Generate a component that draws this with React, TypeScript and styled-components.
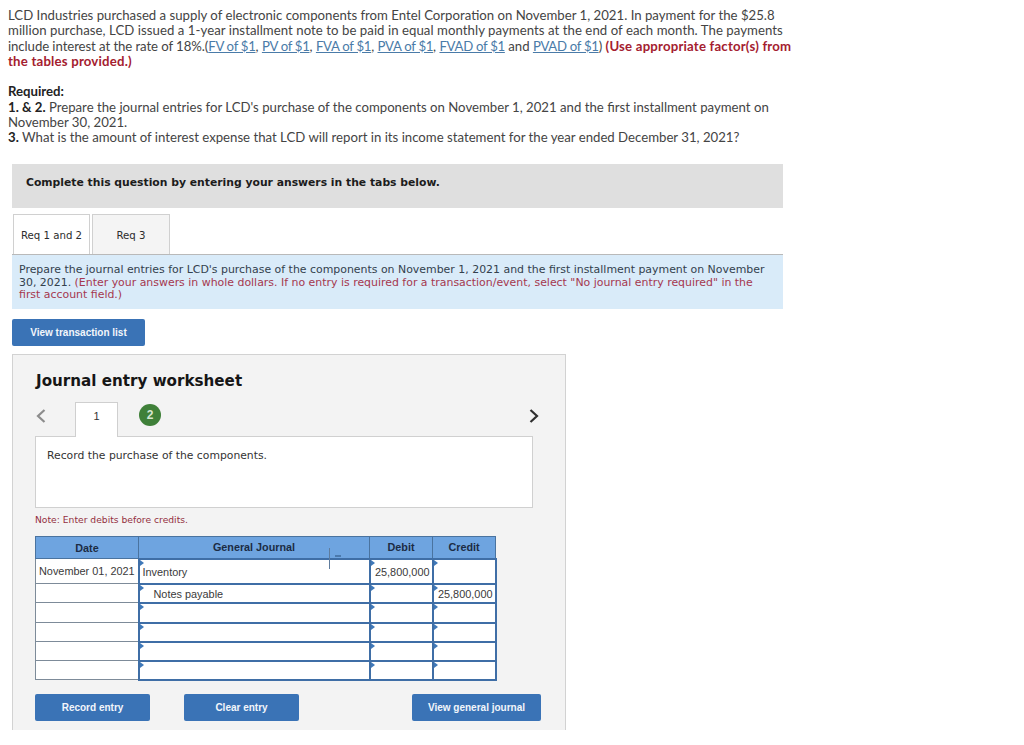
import styled, {createGlobalStyle} from 'styled-components';

const GlobalStyle = createGlobalStyle`
    html, body {
        margin: 0;
        padding: 0;
        background: #fff;
    }
`;

const Page = styled.div`
    width: 1024px;
    height: 745px;
    overflow: hidden;
    box-sizing: border-box;
    padding: 8px 0 0 12px;
    display: flex;
    flex-direction: column;
    align-items: flex-start;
`;

const Question = styled.div`
    margin-left: -4px;
    width: 800px;
    font-family: "Lato", "Open Sans", sans-serif;
    font-size: 13.2px;
    line-height: 15.35px;
    color: #444;
    white-space: nowrap;
`;

const Block = styled.p`
    margin: 0 0 15px;
`;

const Spaced = styled.span<{ $spacing: number }>`
    letter-spacing: ${p => p.$spacing}px;
`;

const Strong = styled.b`
    color: #222;
`;

const Warn = styled.b`
    color: #a4202f;
    letter-spacing: 0.2px;
`;

const Link = styled.a`
    color: #4a7ba8;
    text-decoration: underline;
    letter-spacing: -0.3px;
`;

const Banner = styled.div`
    width: 771px;
    height: 44px;
    margin-top: 3px;
    box-sizing: border-box;
    padding: 12px 14px 0;
    background: #dfdfdf;
    font-family: "DejaVu Sans", sans-serif;
    font-size: 10.8px;
    font-weight: 700;
    line-height: 14px;
    color: #1c1c1c;
`;

const Tabs = styled.div`
    display: flex;
    gap: 2px;
    margin: 6px 0 0 1px;
`;

const Tab = styled.div<{ $active?: boolean }>`
    width: ${p => (p.$active ? '77px' : '78px')};
    height: 40px;
    box-sizing: border-box;
    border: 1px solid #d0d0d0;
    border-bottom: none;
    padding-top: 2px;
    background: ${p => (p.$active ? '#fff' : '#f4f4f4')};
    display: flex;
    align-items: center;
    justify-content: center;
    font-family: "DejaVu Sans", sans-serif;
    font-size: 10.2px;
    color: #2c2c2c;
`;

const Instructions = styled.div`
    width: 771px;
    height: 55px;
    box-sizing: border-box;
    border-top: 1px solid #b9b9b9;
    padding: 9px 7px 0;
    background: #d9ebf9;
    font-family: "DejaVu Sans", sans-serif;
    font-size: 10.93px;
    line-height: 12.8px;
    color: #33414d;
    white-space: nowrap;
`;

const Hint = styled.span`
    color: #a5384f;
`;

const Button = styled.button<{ $width: number }>`
    width: ${p => p.$width}px;
    height: 27px;
    padding: 0;
    border: none;
    border-radius: 2px;
    background: #3a73b6;
    color: #f2f6fb;
    font-family: "Liberation Sans", Arial, sans-serif;
    font-size: 10px;
    font-weight: 700;
`;

const TransactionButton = styled(Button)`
    margin-top: 10px;
`;

const Worksheet = styled.section`
    width: 554px;
    height: 376px;
    margin-top: 8px;
    box-sizing: border-box;
    border: 1px solid #d2d2d2;
    border-bottom: none;
    background: #f3f3f3;
    padding: 15px 32px 0 22px;
`;

const Title = styled.h2`
    margin: 0 0 0 1px;
    font-family: "DejaVu Sans", sans-serif;
    font-size: 15.15px;
    font-weight: 700;
    line-height: 22px;
    color: #161616;
`;

const EntryNav = styled.div`
    display: flex;
    align-items: flex-start;
    height: 35px;
    margin-top: 10px;
`;

const Chevron = styled.svg`
    width: 12px;
    height: 16px;
    margin-top: 6px;
    fill: none;
    stroke-width: 2.2;
`;

const EntryTab = styled.div`
    position: relative;
    z-index: 1;
    width: 43px;
    height: 35px;
    margin-left: 28px;
    box-sizing: border-box;
    border: 1px solid #cfcfcf;
    border-bottom: none;
    background: #fff;
    display: flex;
    align-items: center;
    justify-content: center;
    padding-bottom: 7px;
    font-family: "Liberation Sans", Arial, sans-serif;
    font-size: 11px;
    color: #333;
`;

const EntryBadge = styled.div`
    width: 22px;
    height: 22px;
    margin: 2px 0 0 21px;
    border-radius: 50%;
    background: #3f8039;
    color: #d6e6d2;
    display: flex;
    align-items: center;
    justify-content: center;
    font-family: "Liberation Sans", Arial, sans-serif;
    font-size: 12px;
    font-weight: 700;
`;

const NextChevron = styled(Chevron)`
    margin-left: auto;
    margin-right: -7px;
`;

const EntryBox = styled.div`
    width: 498px;
    height: 72px;
    box-sizing: border-box;
    margin-top: -1px;
    border: 1px solid #d0d0d0;
    background: #fff;
    padding: 12px 11px 0;
    font-family: "DejaVu Sans", sans-serif;
    font-size: 10.8px;
    line-height: 14px;
    color: #333;
`;

const Note = styled.div`
    margin-top: 6px;
    font-family: "DejaVu Sans", sans-serif;
    font-size: 9.2px;
    line-height: 12px;
    color: #93303f;
`;

const TableWrap = styled.div`
    position: relative;
    margin-top: 10px;
    width: 460px;
`;

const Journal = styled.table`
    width: 460px;
    table-layout: fixed;
    border-collapse: collapse;
    font-family: "Liberation Sans", Arial, sans-serif;
    font-size: 10.9px;
    color: #3a3a3a;
`;

const HeadCell = styled.th`
    height: 21px;
    padding: 0;
    border: 1px solid #4a739f;
    background: #6ea4e0;
    color: #1c2c44;
    font-size: 10.8px;
    font-weight: 700;
`;

const DateCell = styled.td<{ $height: number }>`
    height: ${p => p.$height}px;
    padding: 0 0 0 3px;
    border: 1px solid #7d8b99;
    background: #fff;
    white-space: nowrap;
`;

const EntryCell = styled.td<{ $height: number; $align?: string; $indent?: number }>`
    position: relative;
    height: ${p => p.$height}px;
    padding: 1px 2px 0 ${p => p.$indent ?? 3}px;
    border: 2px solid #3f6ea6;
    background: #fff;
    text-align: ${p => p.$align ?? 'left'};
    white-space: nowrap;
`;

const Marker = styled.span`
    position: absolute;
    left: 0;
    top: 0;
    width: 0;
    height: 0;
    border-top: 3px solid transparent;
    border-bottom: 3px solid transparent;
    border-left: 4px solid #3f78b8;
`;

const ResizeLine = styled.span`
    position: absolute;
    left: 294px;
    top: 12px;
    width: 1px;
    height: 21px;
    background: #5f7c9d;
`;

const ResizeDash = styled.span`
    position: absolute;
    left: 300px;
    top: 19px;
    width: 6px;
    height: 2px;
    background: #4b79ad;
`;

const Actions = styled.div`
    display: flex;
    align-items: center;
    width: 506px;
    margin-top: 13px;
`;

const EntryButton = styled(Button)`
    padding-top: 1px;
`;

const ClearButton = styled(EntryButton)`
    margin-left: 34px;
`;

const JournalButton = styled(EntryButton)`
    margin-left: auto;
`;

const rows = [
    {height: 22, date: 'November 01, 2021', account: 'Inventory', debit: '25,800,000', credit: ''},
    {height: 16, date: '', account: 'Notes payable', debit: '', credit: '25,800,000', indent: 14},
    {height: 17, date: '', account: '', debit: '', credit: ''},
    {height: 16, date: '', account: '', debit: '', credit: ''},
    {height: 16, date: '', account: '', debit: '', credit: ''},
    {height: 16, date: '', account: '', debit: '', credit: ''},
];

export default function App() {
    return (
        <Page>
            <GlobalStyle/>
            <Question>
                <Block>
                    LCD Industries purchased a supply of electronic components from Entel Corporation on November 1, 2021. In payment for the $25.8<br/>
                    <Spaced $spacing={0.05}>million purchase, LCD issued a 1-year installment note to be paid in equal monthly payments at the end of each month. The payments</Spaced><br/>
                    <Spaced $spacing={-0.08}>include interest at the rate of 18%.(</Spaced><Link>FV of $1</Link>, <Link>PV of $1</Link>, <Link>FVA of $1</Link>, <Link>PVA of $1</Link>, <Link>FVAD of $1</Link> and <Link>PVAD of $1</Link>) <Warn>(Use appropriate factor(s) from<br/>
                    the tables provided.)</Warn>
                </Block>
                <Block>
                    <Strong>Required:</Strong><br/>
                    <Strong>1. &amp; 2.</Strong> Prepare the journal entries for LCD's purchase of the components on November 1, 2021 and the first installment payment on<br/>
                    November 30, 2021.<br/>
                    <Strong>3.</Strong> What is the amount of interest expense that LCD will report in its income statement for the year ended December 31, 2021?
                </Block>
            </Question>
            <Banner>Complete this question by entering your answers in the tabs below.</Banner>
            <Tabs>
                <Tab $active>Req 1 and 2</Tab>
                <Tab>Req 3</Tab>
            </Tabs>
            <Instructions>
                Prepare the journal entries for LCD's purchase of the components on November 1, 2021 and the first installment payment on November<br/>
                30, 2021. <Hint>(Enter your answers in whole dollars. If no entry is required for a transaction/event, select "No journal entry required" in the<br/>
                first account field.)</Hint>
            </Instructions>
            <TransactionButton $width={133}>View transaction list</TransactionButton>
            <Worksheet>
                <Title>Journal entry worksheet</Title>
                <EntryNav>
                    <Chevron viewBox="0 0 12 16" stroke="#8c8c8c"><path d="M9.5 2 3 8l6.5 6"/></Chevron>
                    <EntryTab>1</EntryTab>
                    <EntryBadge>2</EntryBadge>
                    <NextChevron viewBox="0 0 12 16" stroke="#2f2f2f"><path d="m2.5 2 6.5 6-6.5 6"/></NextChevron>
                </EntryNav>
                <EntryBox>Record the purchase of the components.</EntryBox>
                <Note>Note: Enter debits before credits.</Note>
                <TableWrap>
                    <Journal>
                        <colgroup>
                            <col width={103}/>
                            <col width={231}/>
                            <col width={63}/>
                            <col width={63}/>
                        </colgroup>
                        <thead>
                            <tr>
                                <HeadCell>Date</HeadCell>
                                <HeadCell>General Journal</HeadCell>
                                <HeadCell>Debit</HeadCell>
                                <HeadCell>Credit</HeadCell>
                            </tr>
                        </thead>
                        <tbody>
                            {rows.map((row, i) => (
                                <tr key={i}>
                                    <DateCell $height={row.height}>{row.date}</DateCell>
                                    <EntryCell $height={row.height} $indent={row.indent}><Marker/>{row.account}</EntryCell>
                                    <EntryCell $height={row.height} $align="right"><Marker/>{row.debit}</EntryCell>
                                    <EntryCell $height={row.height} $align="right"><Marker/>{row.credit}</EntryCell>
                                </tr>
                            ))}
                        </tbody>
                    </Journal>
                    <ResizeLine/>
                    <ResizeDash/>
                </TableWrap>
                <Actions>
                    <EntryButton $width={115}>Record entry</EntryButton>
                    <ClearButton $width={115}>Clear entry</ClearButton>
                    <JournalButton $width={129}>View general journal</JournalButton>
                </Actions>
            </Worksheet>
        </Page>
    );
}
